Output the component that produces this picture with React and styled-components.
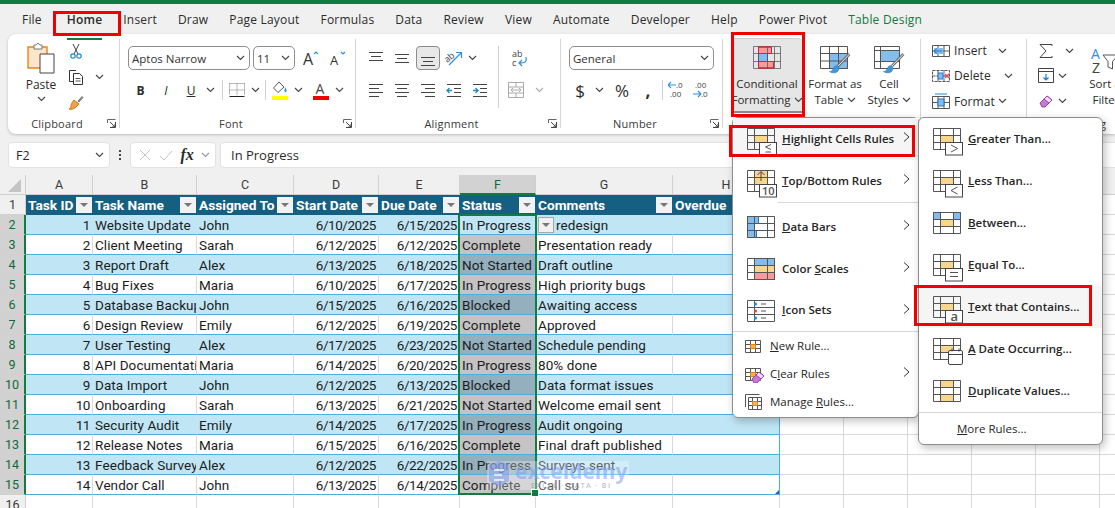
import React from 'react'
import styled, { createGlobalStyle } from 'styled-components'

const UI = `"Open Sans", "Noto Sans", "Liberation Sans", sans-serif`
const CELL = `Roboto, "Liberation Sans", sans-serif`
const GREEN = '#107c41'
const COLS = '26px 67px 104px 97px 85px 81px 76px 137px 107px repeat(6, 64px)'

const Global = createGlobalStyle`
  html, body { margin: 0; padding: 0; background: #f0f0f0; }
  * { box-sizing: border-box; }
  svg { display: block; flex-shrink: 0; }
`

const Page = styled.div`
  position: relative;
  width: 1115px;
  height: 508px;
  overflow: hidden;
  background: #f0f0f0;
  font-family: ${UI};
  color: #2b2b2b;
`
const TitleStrip = styled.div`
  height: 4px;
  background: ${GREEN};
`
const Tabs = styled.nav`
  display: flex;
  gap: 21px;
  height: 30px;
  padding: 8px 0 0 22px;
  font-size: 12px;
  line-height: 16px;
  letter-spacing: 0.2px;
`
const Tab = styled.span`
  position: relative;
  color: ${p => (p.$green ? '#0e7a3e' : '#2b2b2b')};
  font-weight: ${p => (p.$active ? 600 : 400)};
  ${p => p.$active && `
    margin-left: 4px;
    &::after {
      content: '';
      position: absolute;
      left: 0;
      right: 0;
      bottom: -6px;
      height: 2px;
      background: ${GREEN};
    }
  `}
`
const Ribbon = styled.div`
  display: flex;
  height: 100px;
  margin-left: 8px;
  background: #fff;
  border-radius: 8px 0 0 8px;
  box-shadow: 0 1px 3px rgba(0, 0, 0, 0.22);
`
const Group = styled.section`
  flex: none;
  display: flex;
  flex-direction: column;
  width: ${p => p.$w}px;
  height: 100%;
  position: relative;
  &::after {
    content: '';
    position: absolute;
    right: 0;
    top: 5px;
    bottom: 6px;
    width: 1px;
    background: #d6d6d6;
  }
`
const GroupBody = styled.div`
  flex: 1;
  display: flex;
  min-height: 0;
  padding: ${p => p.$pad || '12px 0 0 8px'};
  gap: ${p => p.$gap || 0}px;
`
const GroupFoot = styled.div`
  display: grid;
  grid-template-columns: 1fr auto 1fr;
  align-items: center;
  height: 20px;
  padding: 0 4px 1px 0;
  font-size: 11px;
  line-height: 14px;
  letter-spacing: 0.2px;
  color: #3a3a3a;
  & > span { grid-column: 2; margin-right: 10px; }
  & > svg { grid-column: 3; justify-self: end; }
`
const Stack = styled.div`
  display: flex;
  flex-direction: column;
  gap: ${p => p.$gap ?? 10}px;
  width: ${p => (p.$w ? `${p.$w}px` : 'auto')};
`
const Row = styled.div`
  display: flex;
  align-items: center;
  height: ${p => p.$h || 24}px;
`
const Slot = styled.div`
  display: flex;
  align-items: center;
  justify-content: center;
  flex: none;
  width: ${p => p.$w}px;
  height: ${p => p.$h || 24}px;
  margin-left: ${p => p.$ml || 0}px;
  font-size: ${p => p.$fs || 12}px;
  ${p => p.$on && `
    background: #e8e8e8;
    border: 1px solid #8c8c8c;
    border-radius: 4px;
  `}
`
const VLine = styled.div`
  width: 1px;
  height: ${p => p.$h || 20}px;
  margin: 0 auto;
  background: #d0d0d0;
`
const Combo = styled.div`
  display: flex;
  align-items: center;
  justify-content: space-between;
  flex: none;
  width: ${p => p.$w}px;
  height: 24px;
  margin-right: ${p => p.$mr || 0}px;
  padding: 0 4px 0 3px;
  background: #fff;
  border: 1px solid #8f8f8f;
  border-radius: 5px;
  font-size: 11.5px;
  color: #333;
`
const PasteCol = styled.div`
  display: flex;
  flex-direction: column;
  align-items: center;
  width: 42px;
  font-size: 12px;
  line-height: 16px;
  gap: 3px;
`
const BigBtn = styled.div`
  flex: none;
  display: flex;
  flex-direction: column;
  align-items: center;
  width: ${p => p.$w}px;
  height: 75px;
  padding-top: ${p => (p.$on ? 7 : 8)}px;
  font-size: 11.5px;
  line-height: 16px;
  text-align: center;
  white-space: nowrap;
  ${p => p.$on && `
    background: #e6e6e6;
    border-radius: 4px 4px 0 0;
    border-top: 1px solid #cfcfcf;
    border-bottom: 2px solid #8a8a8a;
  `}
`
const BtnLabel = styled.div`
  margin-top: ${p => p.$mt ?? 6}px;
  display: flex;
  flex-direction: column;
  align-items: center;
  & > span { display: inline-flex; align-items: center; gap: 3px; }
`
const CellAction = styled.div`
  display: flex;
  align-items: center;
  height: 26px;
  font-size: 12px;
  letter-spacing: 0.1px;
  & > svg:first-child { margin-right: 4px; }
  & > span { margin-right: ${p => p.$mr ?? 6}px; }
`
const FormulaWrap = styled.div`
  display: flex;
  align-items: center;
  height: 41px;
  padding-top: 1px;
  font-size: 12.5px;
`
const FieldBox = styled.div`
  display: flex;
  align-items: center;
  justify-content: space-between;
  flex: none;
  width: ${p => p.$w}px;
  height: 26px;
  margin-left: ${p => p.$ml}px;
  padding: 0 5px 0 7px;
  background: #fff;
  border: 1px solid #e2e2e2;
  border-radius: 4px;
`
const FxMark = styled.i`
  font-family: "Liberation Serif", serif;
  font-size: 16px;
  font-weight: 700;
`
const FormulaText = styled.span`
  margin-left: 3px;
  font-size: 13px;
`
const Dots = styled.div`
  display: flex;
  flex-direction: column;
  gap: 2px;
  width: 2px;
  margin-left: 9px;
  & > i { width: 2px; height: 2px; background: #444; }
`
const SheetRow = styled.div`
  display: grid;
  grid-template-columns: ${COLS};
  height: 20px;
  width: 1164px;
`
const ColHead = styled.div`
  display: flex;
  align-items: center;
  justify-content: center;
  background: ${p => (p.$sel ? '#d2d2d2' : '#f0f0f0')};
  color: ${p => (p.$sel ? '#0e6b3a' : '#3a3a3a')};
  border-right: 1px solid #d0d0d0;
  border-bottom: ${p => (p.$sel ? `2px solid ${GREEN}` : '1px solid #d0d0d0')};
  font-family: ${CELL};
  font-size: 12.5px;
`
const RowHead = styled.div`
  display: flex;
  align-items: center;
  justify-content: center;
  background: ${p => (p.$sel ? '#d2d2d2' : '#f0f0f0')};
  color: ${p => (p.$sel ? '#0e6b3a' : '#3a3a3a')};
  border-right: ${p => (p.$sel ? `2px solid ${GREEN}` : '1px solid #d0d0d0')};
  border-bottom: 1px solid #d0d0d0;
  font-family: ${CELL};
  font-size: 12.5px;
`
const Cell = styled.div`
  display: flex;
  align-items: center;
  justify-content: ${p => (p.$right ? 'flex-end' : 'flex-start')};
  min-width: 0;
  padding: 0 2px;
  overflow: hidden;
  white-space: nowrap;
  background: ${p => p.$bg};
  border-right: 1px solid ${p => p.$line};
  border-bottom: 1px solid ${p => p.$rule};
  font-family: ${CELL};
  font-size: 13.5px;
  letter-spacing: ${p => (p.$right ? '-0.45px' : '0.08px')};
  color: #1c1c1c;
`
const TableHead = styled.div`
  display: flex;
  align-items: center;
  justify-content: space-between;
  padding: 0 1px 0 2px;
  overflow: hidden;
  white-space: nowrap;
  background: #156082;
  font-family: ${CELL};
  font-size: 13.7px;
  font-weight: 700;
  color: #fff;
`
const FilterBtn = styled.span`
  flex: none;
  display: flex;
  align-items: center;
  justify-content: center;
  width: 16px;
  height: 16px;
  background: ${p => (p.$plain ? '#f0f0f0' : '#f2f2f2')};
  border: ${p => (p.$plain ? '1px solid #a8a8a8' : 'none')};
  margin-right: ${p => (p.$plain ? 2 : 0)}px;
  &::after {
    content: '';
    border-left: 4px solid transparent;
    border-right: 4px solid transparent;
    border-top: 4px solid #777;
  }
`
const SelectionBox = styled.div`
  position: absolute;
  left: 458px;
  top: 214px;
  width: 79px;
  height: 281px;
  border: 2px solid ${GREEN};
  pointer-events: none;
  &::after {
    content: '';
    position: absolute;
    right: -4px;
    bottom: -4px;
    width: 6px;
    height: 6px;
    background: ${GREEN};
    border: 1px solid #fff;
  }
`
const ResizeCorner = styled.div`
  position: absolute;
  left: 775px;
  top: 490px;
  width: 0;
  height: 0;
  border-left: 4px solid transparent;
  border-bottom: 4px solid #3f4fb5;
`
const Watermark = styled.div`
  position: absolute;
  left: 487px;
  top: 461px;
  width: 142px;
  height: 29px;
  display: flex;
  align-items: flex-start;
  gap: 4px;
  color: rgba(125, 155, 240, 0.55);
  background: rgba(255, 255, 255, 0.3);
  pointer-events: none;
`
const WmText = styled.div`
  display: flex;
  flex-direction: column;
  align-items: center;
  font-family: "Open Sans", sans-serif;
  font-weight: 700;
  font-size: 21px;
  line-height: 21px;
  & > small {
    font-size: 7px;
    font-weight: 600;
    line-height: 8px;
    letter-spacing: 1.4px;
    color: rgba(120, 130, 150, 0.5);
  }
`
const Menu = styled.div`
  position: absolute;
  left: ${p => p.$x}px;
  top: 117px;
  width: ${p => p.$w}px;
  height: ${p => p.$h}px;
  background: #fff;
  border: 1px solid #8e8e8e;
  border-radius: 6px;
  box-shadow: 2px 3px 8px rgba(0, 0, 0, 0.25);
`
const MenuItem = styled.div`
  display: flex;
  align-items: center;
  height: ${p => p.$h || 42}px;
  padding: 0 8px 0 ${p => p.$pl || 14}px;
  background: ${p => (p.$hover ? '#f5f5f5' : 'transparent')};
  font-size: 11.5px;
  font-weight: ${p => (p.$plain ? 400 : 600)};
  color: #262626;
  white-space: nowrap;
  & > svg:first-child {
    margin-right: ${p => p.$iconGap ?? 3}px;
    margin-top: ${p => (p.$plain ? 0 : 6)}px;
  }
  & > span { flex: 1; margin-top: -2px; }
  & > svg:last-child:not(:first-child) { margin-top: -4px; }
`
const MenuRule = styled.div`
  height: ${p => p.$h || 1}px;
  margin-left: ${p => p.$ml || 0}px;
  border-top: 1px solid #d8d8d8;
`
const RedMark = styled.div`
  position: absolute;
  left: ${p => p.$x}px;
  top: ${p => p.$y}px;
  width: ${p => p.$w}px;
  height: ${p => p.$h}px;
  border: 3px solid #f00000;
  pointer-events: none;
`

const Ico = ({ w = 16, h = 16, children }) => (
  <svg width={w} height={h} viewBox={`0 0 ${w} ${h}`} fill="none">{children}</svg>
)
const Chev = ({ c = '#444' }) => (
  <Ico w={9} h={6}><path d="M1 1l3.500 3.500L8 1" stroke={c} strokeWidth="1.100" /></Ico>
)
const Launcher = () => (
  <Ico w={9} h={9}>
    <path d="M.5 4V.5H8.500" stroke="#666" />
    <path d="M8.500 3v5.500H3M3 3l5 5M8 5v3H5" stroke="#444" />
  </Ico>
)
const Lines = ({ spec }) => (
  <Ico w={16} h={16}>
    {spec.map(([x1, x2, y], i) => <path key={i} d={`M${x1} ${y}H${x2}`} stroke="#444" />)}
  </Ico>
)
const alignTop = [[1, 15, 2.5], [3, 13, 6.5], [1, 15, 10.5]]
const alignMid = [[1, 15, 4.5], [3, 13, 8.5], [1, 15, 12.5]]
const alignBot = [[1, 15, 7.5], [3, 13, 11.5], [1, 15, 15.5]]
const alignL = [[1, 15, 2.5], [1, 11, 6.5], [1, 15, 10.5], [1, 11, 14.5]]
const alignC = [[1, 15, 2.5], [3, 13, 6.5], [1, 15, 10.5], [3, 13, 14.5]]
const alignR = [[1, 15, 2.5], [5, 15, 6.5], [1, 15, 10.5], [5, 15, 14.5]]

const Indent = ({ back }) => (
  <Ico w={16} h={16}>
    <path d="M1 2.500H15M8 6.500H15M8 10.500H15M1 14.500H15" stroke="#444" />
    <path d={back ? 'M6 8.500H1M3.500 6L1 8.500 3.500 11' : 'M1 8.500H6M3.500 6L6 8.500 3.500 11'} stroke="#1e8bcd" strokeWidth="1.300" />
  </Ico>
)

// base grid shared by the conditional formatting menu icons
const GridIco = ({ children, under, w = 32, h = 28 }) => (
  <Ico w={w} h={h}>
    {under}
    <path d="M.5.5h27v21H.5zM.5 7.500h27M.5 14.500h27M7.500.5v21M20.500.5v21" stroke="#555" />
    {children}
  </Ico>
)
const Hot = () => <path d="M7.500 7.500h13v7h-13z" fill="#f9d68e" stroke="#e5820c" />
const Badge = ({ children }) => (
  <>
    <rect x="12.500" y="14.500" width="17" height="12.500" fill="#fff" stroke="#444" />
    {children}
  </>
)
const BadgeText = styled.text`
  font-family: ${UI};
  font-size: ${p => p.$fs}px;
  fill: #555;
`
const GreaterIco = () => <GridIco under={<Hot />}><Badge><path d="M18 17l6.500 3.500L18 24" stroke="#555" /></Badge></GridIco>
const LessIco = () => <GridIco under={<Hot />}><Badge><path d="M24.500 17L18 20.500l6.500 3.500" stroke="#555" /></Badge></GridIco>
const LessEqIco = () => <GridIco under={<Hot />}><Badge><path d="M24 16.500L18.500 19l5.500 2.500M18.500 24h5.500" stroke="#555" /></Badge></GridIco>
const BetweenIco = () => (
  <GridIco under={<><Hot /><path d="M.5.500h7v7h-7zM20.500.5h7v7h-7z" fill="#85bcee" stroke="#1e78c8" /></>} />
)
const EqualIco = () => <GridIco under={<Hot />}><Badge><path d="M17 18.500h8M17 22.500h8" stroke="#555" /></Badge></GridIco>
const TextIco = () => (
  <GridIco under={<Hot />}><Badge><BadgeText x="17.500" y="25" $fs={13}>a</BadgeText></Badge></GridIco>
)
const DateIco = () => (
  <GridIco under={<Hot />}>
    <rect x="15.500" y="12.500" width="14" height="14" rx="1.500" fill="#fff" stroke="#444" />
    <path d="M15.500 16.500h14M19 10.500v3M26 10.500v3" stroke="#444" />
  </GridIco>
)
const DupIco = () => (
  <GridIco under={<path d="M7.500.5h13v7h-13zM7.500 14.500h13v7h-13z" fill="#f9d68e" stroke="#e5820c" />} />
)
const TopIco = () => (
  <GridIco under={<path d="M7.500.5h13v14h-13z" fill="#f9d68e" stroke="#e5820c" />}>
    <path d="M14 11V2M10.500 5L14 1.500 17.500 5" stroke="#444" />
    <Badge><BadgeText x="15" y="25" $fs={11}>10</BadgeText></Badge>
  </GridIco>
)
const BarsIco = () => (
  <GridIco under={<path d="M.5.5h11v7h-11zM.5 7.500h7v7h-7zM.5 14.500h9v7h-9z" fill="#85bcee" stroke="#1e78c8" />} />
)
const ScaleIco = () => (
  <GridIco under={<><path d="M7.500.5h20v7h-20z" fill="#85bcee" stroke="#1e78c8" /><path d="M7.500 7.500h20v7h-20z" fill="#f9d68e" stroke="#e5820c" /><path d="M7.500 14.500h20v7h-20z" fill="#f79a9e" stroke="#d9232e" /></>} />
)
const SetsIco = () => (
  <Ico w={32} h={28}>
    <path d="M.5.5h27v21H.5zM.5 7.500h27M.5 14.500h27M7.500.5v21" stroke="#555" />
    <path d="M14 4h5M14 11h5M14 18h5" stroke="#555" />
    <circle cx="8.500" cy="4" r="1.600" fill="#1e8bcd" />
    <circle cx="8.500" cy="11" r="1.600" fill="#e8404a" />
    <circle cx="8.500" cy="18" r="1.600" fill="#1e8bcd" />
  </Ico>
)
const Eraser = ({ x = 0, y = 0 }) => (
  <g transform={`translate(${x} ${y})`}>
    <path d="M1 9l7-7 5 4-7 7H3z" fill="#c77ad3" stroke="#9b3fb0" />
    <path d="M8 2l5 4-3 3-5-4z" fill="#f2dcf6" stroke="#9b3fb0" />
  </g>
)
const SmallGrid = ({ children, back }) => (
  <Ico w={20} h={18}>
    {back && <path d="M.5 14V1.500h14" stroke="#555" />}
    <path d={back
      ? 'M3.500 4.500h13v12h-13zM3.500 8.500h13M3.500 12.500h13M7.500 4.500v12M12.500 4.500v12'
      : 'M.5 3.500h15v12H.5zM.5 7.500h15M.5 11.500h15M5.500 3.500v12M10.500 3.500v12'} stroke="#555" />
    <path d={back ? 'M7.500 8.500h5v4h-5z' : 'M5.500 7.500h5v4h-5z'} fill="#f9b34e" stroke="#e5820c" />
    {children}
  </Ico>
)
const MenuChevron = () => (
  <Ico w={7} h={10}><path d="M1 .5L6 5 1 9.500" stroke="#333" /></Ico>
)
const Brush = () => (
  <>
    <path d="M29.500 8L18 20" stroke="#666" strokeWidth="2.600" />
    <path d="M29.500 8L18 20" stroke="#fff" strokeWidth=".9" />
    <path d="M17 19.500c-3 0-3.500 3-4.500 4.500-.7 1-1.500 1.500-3 1.500 3 2.200 7.500 1.500 8.800-1 .8-1.800.7-3.800-1.300-5z" fill="#3f97dd" stroke="#2b78b8" strokeWidth=".6" />
  </>
)
const TableIco = () => (
  <Ico w={31} h={28}>
    <path d="M9.500 7.500h18v15h-18z" fill="#85bcee" stroke="#1e78c8" />
    <path d="M.5.500h27v22H.5zM.5 7.500h27M.5 15h27M9.500.5v22M18.500.5v22" stroke="#555" />
    <Brush />
  </Ico>
)
const StylesIco = () => (
  <Ico w={31} h={28}>
    <path d="M6.500 4.500h19v11h-19z" fill="#85bcee" stroke="#1e78c8" />
    <path d="M.5.500h25v22H.5zM.5 4.500h25M.5 15.500h25M6.500.5v22" stroke="#555" />
    <Brush />
  </Ico>
)
const CondIco = () => (
  <Ico w={28} h={24}>
    <path d="M5.500 1h13v6.500h-13zM5.500 15.500h15v6.500h-15z" fill="#f79a9e" stroke="#d9232e" />
    <path d="M5.500 7.500h9v8h-9z" fill="#85bcee" stroke="#1e78c8" />
    <path d="M.5.500h27v22H.5zM.5 7.500h27M.5 15.500h27M5.500.5v22M14.500.5v22M21.500.5v22" stroke="#555" strokeOpacity=".75" />
    <path d="M5.500 1h13v6.500h-13zM5.500 15.500h15v6.500h-15z" stroke="#d9232e" />
  </Ico>
)
const PasteIco = () => (
  <Ico w={28} h={32}>
    <path d="M1 5h19v21H1z" fill="#fbe6c8" stroke="#e8841a" strokeWidth="1.400" />
    <path d="M7 5V3h2l2-2 2 2h2v4H7z" fill="#fff" stroke="#777" />
    <path d="M13 12h14v19H13z" fill="#fff" stroke="#444" />
  </Ico>
)
const CutIco = () => (
  <Ico w={12} h={16}>
    <path d="M3 1l5 10M9 1L4 11" stroke="#444" />
    <circle cx="3" cy="13" r="2.200" stroke="#1e8bcd" strokeWidth="1.200" />
    <circle cx="9" cy="13" r="2.200" stroke="#1e8bcd" strokeWidth="1.200" />
  </Ico>
)
const CopyIco = () => (
  <Ico w={16} h={16}>
    <path d="M8 1.500H1.500v11H5" stroke="#333" />
    <path d="M5.500 4.500h6l3 3v8h-9z" fill="#fff" stroke="#333" />
    <path d="M7.500 9.500h5M7.500 12h5" stroke="#555" />
  </Ico>
)
const PainterIco = () => (
  <Ico w={16} h={16}>
    <path d="M10 6l4-4.500 1 1L11 7z" fill="#999" stroke="#555" strokeWidth=".7" />
    <path d="M6 5l5 4-3 3c-2 2-5 3-7 2 1-1 2-1 2-3 0-1 1-4 3-6z" fill="#f2a14b" stroke="#d9730c" />
  </Ico>
)
const GrowFont = ({ up }) => (
  <Ico w={16} h={16}>
    <text x="0" y="15" fontFamily={UI} fontSize={up ? 16 : 13} fill="#333">A</text>
    <path d={up ? 'M11 4l2-2 2 2' : 'M11 2l2 2 2-2'} stroke="#2f8fdc" strokeWidth="1.200" />
  </Ico>
)
const BordersIco = () => (
  <Ico w={16} h={16}>
    <path d="M.5 1.500h15M.5 8h15M8 1.500v12M.5 1.500v12M15.500 1.500v12" stroke="#777" strokeDasharray="1 1" />
    <path d="M.5 14.500h15" stroke="#222" />
  </Ico>
)
const FillIco = () => (
  <Ico w={16} h={19}>
    <path d="M7 1L1.500 7 6 11.500 12 6z" fill="#fff" stroke="#555" />
    <path d="M13 6c1 2 2 3 1.500 4.500S12 11 12.500 9z" fill="#2f8fdc" />
    <rect y="15" width="16" height="4" fill="#ffff00" />
  </Ico>
)
const ColorA = () => (
  <Ico w={16} h={19}>
    <text x="2.500" y="13" fontFamily={UI} fontSize="14" fill="#444">A</text>
    <rect y="15" width="16" height="4" fill="#f00000" />
  </Ico>
)
const OrientIco = () => (
  <Ico w={18} h={16}>
    <text x="0" y="11" fontFamily={UI} fontSize="9" fill="#444" transform="rotate(-40 4 9)">ab</text>
    <path d="M4 15L16 3M11 2.500h5.500V8" stroke="#2f8fdc" strokeWidth="1.200" />
  </Ico>
)
const WrapIco = () => (
  <Ico w={16} h={18}>
    <text x="1" y="8" fontFamily={UI} fontSize="9" fill="#444">ab</text>
    <text x="1" y="17" fontFamily={UI} fontSize="9" fill="#444">c</text>
    <path d="M15 8c1 5-1 6-7 6M11 11l-3 3 3 3" stroke="#2f8fdc" strokeWidth="1.200" />
  </Ico>
)
const MergeIco = () => (
  <Ico w={16} h={16}>
    <path d="M.5.500h15v15H.5zM.5 5h15M.5 11h15M8 .5V5M8 11v4.500" stroke="#aaa" />
    <path d="M3 8h10M5 6L3 8l2 2M11 6l2 2-2 2" stroke="#aaa" />
  </Ico>
)
const DecimalIco = ({ more }) => (
  <Ico w={18} h={18}>
    <text x={more ? 2 : 8} y="7" fontFamily={UI} fontSize="8" fill="#444">{more ? '.00' : '.0'}</text>
    <text x={more ? 8 : 2} y="16" fontFamily={UI} fontSize="8" fill="#444">{more ? '.0' : '.00'}</text>
    {more
      ? <path d="M0 13h8M5 10l3 3-3 3" stroke="#2f8fdc" strokeWidth="1.100" />
      : <path d="M8 4H0M3 1L0 4l3 3" stroke="#2f8fdc" strokeWidth="1.100" />}
  </Ico>
)
const InsertIco = () => (
  <Ico w={18} h={14}>
    <path d="M.5 1.500h17v11H.5zM.5 7h17M6 1.500v11M12 1.500v11" stroke="#555" />
    <path d="M2 4h9v6H2z" fill="#85bcee" />
    <path d="M10 7H2M5 4.500L2 7l3 2.500" stroke="#1e78c8" />
  </Ico>
)
const DeleteIco = () => (
  <Ico w={18} h={14}>
    <path d="M.5 1.500h17v11H.5zM.5 7h17M6 1.500v11M12 1.500v11" stroke="#555" strokeDasharray="3 1" />
    <path d="M6 4h5v6H6z" fill="#85bcee" stroke="#1e78c8" />
    <path d="M13 5l4 4M17 5l-4 4" stroke="#e8404a" strokeWidth="1.200" />
  </Ico>
)
const FormatIco = () => (
  <Ico w={18} h={16}>
    <path d="M.5 3.500h17v12H.5zM.5 9.500h17M6 3.500v12M12 3.500v12" stroke="#555" />
    <path d="M6 6h6v7H6z" fill="#85bcee" stroke="#1e78c8" />
    <path d="M3 1h12" stroke="#1e8bcd" />
  </Ico>
)
const SigmaIco = () => (
  <Ico w={16} h={16}><path d="M14 3V1.500H2L8 8l-6 6.500h12V13" stroke="#444" /></Ico>
)
const FillDownIco = () => (
  <Ico w={16} h={15}>
    <path d="M.5.500h15v14H.5zM.5 3.500h15" stroke="#444" />
    <path d="M8 6v6M5.500 9.500L8 12l2.500-2.500" stroke="#1e78c8" strokeWidth="1.200" />
  </Ico>
)
const EraserIco = () => <Ico w={16} h={16}><Eraser x={1} y={1} /></Ico>
const SortIco = () => (
  <Ico w={36} h={28}>
    <text x="3" y="13" fontFamily={UI} fontSize="14" fill="#2f8fdc">A</text>
    <text x="4" y="27" fontFamily={UI} fontSize="14" fill="#444">Z</text>
    <path d="M15 9h15l-5.500 6.500V23L20 21v-5.500z" fill="#fff" stroke="#555" />
  </Ico>
)
const BrandMark = () => (
  <Ico w={24} h={28}>
    <path d="M2 4l10-4 10 4v16l-10 6-10-6z" fill="currentColor" />
    <path d="M7 9h10M7 14h8M7 19h10" stroke="#fff" strokeOpacity=".7" strokeWidth="2" />
  </Ico>
)

const TASKS = [
  ['Website Update', 'John', '6/10/2025', '6/15/2025', 'In Progress', 'redesign'],
  ['Client Meeting', 'Sarah', '6/12/2025', '6/12/2025', 'Complete', 'Presentation ready'],
  ['Report Draft', 'Alex', '6/13/2025', '6/18/2025', 'Not Started', 'Draft outline'],
  ['Bug Fixes', 'Maria', '6/10/2025', '6/17/2025', 'In Progress', 'High priority bugs'],
  ['Database Backup', 'John', '6/15/2025', '6/16/2025', 'Blocked', 'Awaiting access'],
  ['Design Review', 'Emily', '6/12/2025', '6/19/2025', 'Complete', 'Approved'],
  ['User Testing', 'Alex', '6/17/2025', '6/23/2025', 'Not Started', 'Schedule pending'],
  ['API Documentation', 'Maria', '6/14/2025', '6/20/2025', 'In Progress', '80% done'],
  ['Data Import', 'John', '6/12/2025', '6/13/2025', 'Blocked', 'Data format issues'],
  ['Onboarding', 'Sarah', '6/13/2025', '6/21/2025', 'Not Started', 'Welcome email sent'],
  ['Security Audit', 'Emily', '6/14/2025', '6/17/2025', 'In Progress', 'Audit ongoing'],
  ['Release Notes', 'Maria', '6/15/2025', '6/16/2025', 'Complete', 'Final draft published'],
  ['Feedback Survey', 'Alex', '6/12/2025', '6/22/2025', 'In Progress', 'Surveys sent'],
  ['Vendor Call', 'John', '6/13/2025', '6/14/2025', 'Complete', 'Call su'],
]
const TABS = ['File', 'Home', 'Insert', 'Draw', 'Page Layout', 'Formulas', 'Data', 'Review', 'View', 'Automate', 'Developer', 'Help', 'Power Pivot', 'Table Design']
const LETTERS = ['A', 'B', 'C', 'D', 'E', 'F', 'G', 'H', 'I', 'J', 'K', 'L', 'M', 'N']
const HEADERS = ['Task ID', 'Task Name', 'Assigned To', 'Start Date', 'Due Date', 'Status', 'Comments', 'Overdue']
const SPARE = [0, 1, 2, 3, 4, 5]

function TaskRow({ task, id }) {
  const blue = id % 2 === 1
  const bg = blue ? '#c0e6f5' : '#fff'
  const line = blue ? '#c0e6f5' : '#d9d9d9'
  const rule = '#45b0e1'
  const tint = id === 1 ? '#c0e6f5' : blue ? '#94afbd' : '#c4c4c4'
  const [name, who, start, due, status, note] = task
  const base = { $bg: bg, $line: line, $rule: rule }
  return (
    <SheetRow>
      <RowHead $sel>{id + 1}</RowHead>
      <Cell {...base} $right>{id}</Cell>
      <Cell {...base}>{name}</Cell>
      <Cell {...base}>{who}</Cell>
      <Cell {...base} $right>{start}</Cell>
      <Cell {...base} $right>{due}</Cell>
      <Cell {...base} $bg={tint} $line={tint}>{status}</Cell>
      <Cell {...base}>
        {id === 1 && <FilterBtn $plain />}
        {note}
      </Cell>
      <Cell {...base} $line={rule} />
      {SPARE.map(n => <Cell key={n} $bg="#fff" $line="#d9d9d9" $rule="#d9d9d9" />)}
    </SheetRow>
  )
}

export default function App() {
  return (
    <Page>
      <Global />
      <TitleStrip />
      <Tabs>
        {TABS.map(t => (
          <Tab key={t} $active={t === 'Home'} $green={t === 'Table Design'}>{t}</Tab>
        ))}
      </Tabs>

      <Ribbon>
        <Group $w={112}>
          <GroupBody $pad="8px 0 0 12px" $gap={6}>
            <PasteCol>
              <PasteIco />
              <span>Paste</span>
              <Chev />
            </PasteCol>
            <Stack $gap={9}>
              <Row $h={17}><Slot $w={16} $h={17}><CutIco /></Slot></Row>
              <Row $h={17}><Slot $w={16} $h={17}><CopyIco /></Slot><Slot $w={9} $h={17} $ml={11}><Chev /></Slot></Row>
              <Row $h={17}><Slot $w={16} $h={17}><PainterIco /></Slot></Row>
            </Stack>
          </GroupBody>
          <GroupFoot><span>Clipboard</span><Launcher /></GroupFoot>
        </Group>

        <Group $w={236}>
          <GroupBody>
            <Stack>
              <Row>
                <Combo $w={122} $mr={3}>Aptos Narrow<Chev /></Combo>
                <Combo $w={42}>11<Chev /></Combo>
                <Slot $w={16} $ml={8}><GrowFont up /></Slot>
                <Slot $w={16} $ml={11}><GrowFont /></Slot>
              </Row>
              <Row $h={20}>
                <Slot $w={25} $h={20}><strong>B</strong></Slot>
                <Slot $w={26} $h={20}><i>I</i></Slot>
                <Slot $w={24} $h={20}><u>U</u></Slot>
                <Slot $w={14} $h={20}><Chev /></Slot>
                <Slot $w={10} $h={20}><VLine /></Slot>
                <Slot $w={20} $h={20}><BordersIco /></Slot>
                <Slot $w={16} $h={20}><Chev /></Slot>
                <Slot $w={4} $h={20}><VLine /></Slot>
                <Slot $w={26} $h={20}><FillIco /></Slot>
                <Slot $w={10} $h={20}><Chev /></Slot>
                <Slot $w={20} $h={20} $ml={8}><ColorA /></Slot>
                <Slot $w={16} $h={20}><Chev /></Slot>
              </Row>
            </Stack>
          </GroupBody>
          <GroupFoot><span>Font</span><Launcher /></GroupFoot>
        </Group>

        <Group $w={205}>
          <GroupBody $pad="12px 0 0 7px">
            <Stack $w={135}>
              <Row>
                <Slot $w={26}><Lines spec={alignTop} /></Slot>
                <Slot $w={26}><Lines spec={alignMid} /></Slot>
                <Slot $w={24} $ml={1} $on><Lines spec={alignBot} /></Slot>
                <Slot $w={26} $ml={1}><OrientIco /></Slot>
                <Slot $w={10}><Chev /></Slot>
              </Row>
              <Row $h={20}>
                <Slot $w={26} $h={20}><Lines spec={alignL} /></Slot>
                <Slot $w={26} $h={20}><Lines spec={alignC} /></Slot>
                <Slot $w={26} $h={20}><Lines spec={alignR} /></Slot>
                <Slot $w={26} $h={20}><Indent back /></Slot>
                <Slot $w={26} $h={20}><Indent /></Slot>
              </Row>
            </Stack>
            <VLine $h={62} />
            <Stack $w={62}>
              <Row><Slot $w={27} $ml={6}><WrapIco /></Slot></Row>
              <Row $h={20}>
                <Slot $w={22} $h={20} $ml={6}><MergeIco /></Slot>
                <Slot $w={16} $h={20} $ml={4}><Chev c="#aaa" /></Slot>
              </Row>
            </Stack>
          </GroupBody>
          <GroupFoot><span>Alignment</span><Launcher /></GroupFoot>
        </Group>

        <Group $w={162}>
          <GroupBody>
            <Stack>
              <Row><Combo $w={145}>General<Chev /></Combo></Row>
              <Row $h={20}>
                <Slot $w={22} $h={20} $fs={17}>$</Slot>
                <Slot $w={16} $h={20}><Chev /></Slot>
                <Slot $w={30} $h={20} $fs={17}>%</Slot>
                <Slot $w={22} $h={20} $fs={17}><strong>,</strong></Slot>
                <Slot $w={6} $h={20}><VLine /></Slot>
                <Slot $w={24} $h={20}><DecimalIco /></Slot>
                <Slot $w={26} $h={20}><DecimalIco more /></Slot>
              </Row>
            </Stack>
          </GroupBody>
          <GroupFoot><span>Number</span><Launcher /></GroupFoot>
        </Group>

        <Group $w={198}>
          <GroupBody $pad="4px 0 0 9px">
            <BigBtn $w={70} $on>
              <CondIco />
              <BtnLabel><span>Conditional</span><span>Formatting <Chev /></span></BtnLabel>
            </BigBtn>
            <BigBtn $w={66}>
              <TableIco />
              <BtnLabel $mt={2}><span>Format as</span><span>Table <Chev /></span></BtnLabel>
            </BigBtn>
            <BigBtn $w={42}>
              <StylesIco />
              <BtnLabel $mt={2}><span>Cell</span><span>Styles <Chev /></span></BtnLabel>
            </BigBtn>
          </GroupBody>
          <GroupFoot><span>Styles</span></GroupFoot>
        </Group>

        <Group $w={106}>
          <GroupBody $pad="4px 0 0 11px">
            <Stack $gap={0}>
              <CellAction $mr={11}><InsertIco /><span>Insert</span><Chev /></CellAction>
              <CellAction $mr={13}><DeleteIco /><span>Delete</span><Chev /></CellAction>
              <CellAction $mr={3}><FormatIco /><span>Format</span><Chev /></CellAction>
            </Stack>
          </GroupBody>
          <GroupFoot><span>Cells</span></GroupFoot>
        </Group>

        <Group $w={136}>
          <GroupBody $pad="4px 0 0 11px">
            <Stack $gap={0} $w={46}>
              <CellAction><SigmaIco /><Slot $w={9} $h={16} $ml={7}><Chev /></Slot></CellAction>
              <CellAction><FillDownIco /><Slot $w={9} $h={16}><Chev /></Slot></CellAction>
              <CellAction><EraserIco /><Slot $w={9} $h={16}><Chev /></Slot></CellAction>
            </Stack>
            <BigBtn $w={44}>
              <SortIco />
              <BtnLabel $mt={2}><span>Sort &amp;</span><span>Filter</span></BtnLabel>
            </BigBtn>
          </GroupBody>
          <GroupFoot><span>Editing</span></GroupFoot>
        </Group>
      </Ribbon>

      <FormulaWrap>
        <FieldBox $w={102} $ml={8}>F2<Chev /></FieldBox>
        <Dots><i /><i /><i /></Dots>
        <FieldBox $w={86} $ml={9}>
          <Ico w={14} h={14}><path d="M2 2l10 10M12 2L2 12" stroke="#c4c4c4" /></Ico>
          <Ico w={14} h={14}><path d="M1 8l4 4 8-9" stroke="#c4c4c4" /></Ico>
          <FxMark>fx</FxMark>
          <Chev c="#999" />
        </FieldBox>
        <FieldBox $w={910} $ml={4}><FormulaText>In Progress</FormulaText></FieldBox>
      </FormulaWrap>

      <SheetRow>
        <ColHead>
          <Ico w={18} h={18}><path d="M17 3v13H4z" fill="#c4c4c4" /></Ico>
        </ColHead>
        {LETTERS.slice(0, 14).map(l => <ColHead key={l} $sel={l === 'F'}>{l}</ColHead>)}
      </SheetRow>

      <SheetRow>
        <RowHead>1</RowHead>
        {HEADERS.map(h => <TableHead key={h}>{h}<FilterBtn /></TableHead>)}
        {SPARE.map(n => <Cell key={n} $bg="#fff" $line="#d9d9d9" $rule="#d9d9d9" />)}
      </SheetRow>
      {TASKS.map((task, i) => <TaskRow key={i} task={task} id={i + 1} />)}
      <SheetRow>
        <RowHead>16</RowHead>
        {LETTERS.map(l => <Cell key={l} $bg="#fff" $line="#d9d9d9" $rule="#d9d9d9" />)}
      </SheetRow>

      <SelectionBox />
      <ResizeCorner />
      <Watermark>
        <BrandMark />
        <WmText>exceldemy<small>EXCEL · DATA · BI</small></WmText>
      </Watermark>

      <Menu $x={732} $w={187} $h={301}>
        <MenuItem $hover><LessEqIco /><span><u>H</u>ighlight Cells Rules</span><MenuChevron /></MenuItem>
        <MenuItem><TopIco /><span><u>T</u>op/Bottom Rules</span><MenuChevron /></MenuItem>
        <MenuRule $h={4} $ml={45} />
        <MenuItem><BarsIco /><span><u>D</u>ata Bars</span><MenuChevron /></MenuItem>
        <MenuItem><ScaleIco /><span>Color <u>S</u>cales</span><MenuChevron /></MenuItem>
        <MenuItem $h={41}><SetsIco /><span><u>I</u>con Sets</span><MenuChevron /></MenuItem>
        <MenuRule />
        <MenuItem $h={28} $plain $pl={12} $iconGap={5}><SmallGrid /><span><u>N</u>ew Rule...</span></MenuItem>
        <MenuItem $h={28} $plain $pl={12} $iconGap={5}>
          <SmallGrid><Eraser x={6} y={5} /></SmallGrid><span>C<u>l</u>ear Rules</span><MenuChevron />
        </MenuItem>
        <MenuItem $h={28} $plain $pl={12} $iconGap={5}><SmallGrid back /><span>Manage <u>R</u>ules...</span></MenuItem>
      </Menu>

      <Menu $x={918} $w={185} $h={328}>
        <MenuItem><GreaterIco /><span><u>G</u>reater Than...</span></MenuItem>
        <MenuItem><LessIco /><span><u>L</u>ess Than...</span></MenuItem>
        <MenuItem><BetweenIco /><span><u>B</u>etween...</span></MenuItem>
        <MenuItem><EqualIco /><span><u>E</u>qual To...</span></MenuItem>
        <MenuItem $hover><TextIco /><span><u>T</u>ext that Contains...</span></MenuItem>
        <MenuItem><DateIco /><span><u>A</u> Date Occurring...</span></MenuItem>
        <MenuItem><DupIco /><span><u>D</u>uplicate Values...</span></MenuItem>
        <MenuRule />
        <MenuItem $h={32} $plain $pl={38}><span><u>M</u>ore Rules...</span></MenuItem>
      </Menu>

      <RedMark $x={53} $y={11} $w={68} $h={25} />
      <RedMark $x={731} $y={32} $w={74} $h={85} />
      <RedMark $x={729} $y={125} $w={186} $h={32} />
      <RedMark $x={914} $y={285} $w={178} $h={41} />
    </Page>
  )
}
